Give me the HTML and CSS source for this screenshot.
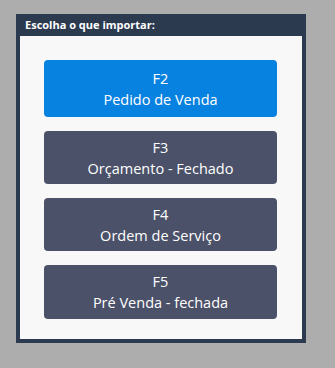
FILE: index.html
```html
<!DOCTYPE html>
<html>
<head>
<meta charset="utf-8">
<link rel="stylesheet" href="styles.css">
</head>
<body>
<div class="dialog">
  <div class="dialog-title">Escolha o que importar:</div>
  <div class="dialog-body">
    <button class="opt opt-primary"><span>F2</span><span>Pedido de Venda</span></button>
    <button class="opt"><span>F3</span><span>Orçamento - Fechado</span></button>
    <button class="opt"><span>F4</span><span>Ordem de Serviço</span></button>
    <button class="opt opt-last"><span>F5</span><span>Pré Venda - fechada</span></button>
  </div>
</div>
</body>
</html>
```
FILE: styles.css
```css
html, body {
  margin: 0;
  padding: 0;
  background: #adadad;
  width: 335px;
  height: 368px;
  overflow: hidden;
}
body {
  padding: 14px 0 0 16px;
  box-sizing: border-box;
  font-family: "Open Sans", "Noto Sans", sans-serif;
}
.dialog {
  width: 290px;
  background: #2c3a50;
  padding: 0 4px 4px 4px;
  box-sizing: border-box;
}
.dialog-title {
  height: 22px;
  color: #ffffff;
  font-weight: 700;
  font-size: 11px;
  line-height: 22px;
  padding-left: 5px;
  letter-spacing: 0;
}
.dialog-body {
  background: #f8f8f8;
  padding: 24px 25px 20px 24px;
  display: flex;
  flex-direction: column;
  gap: 14px;
}
.opt {
  height: 53px;
  border: none;
  border-radius: 4px;
  background: #4b5168;
  color: #ffffff;
  font-family: "Open Sans", "Noto Sans", sans-serif;
  font-size: 14.5px;
  line-height: 21px;
  display: flex;
  flex-direction: column;
  align-items: center;
  justify-content: center;
  padding: 0;
}
.opt-primary {
  height: 57px;
  background: #0882e0;
}
.opt-last {
  height: 54px;
}
```
